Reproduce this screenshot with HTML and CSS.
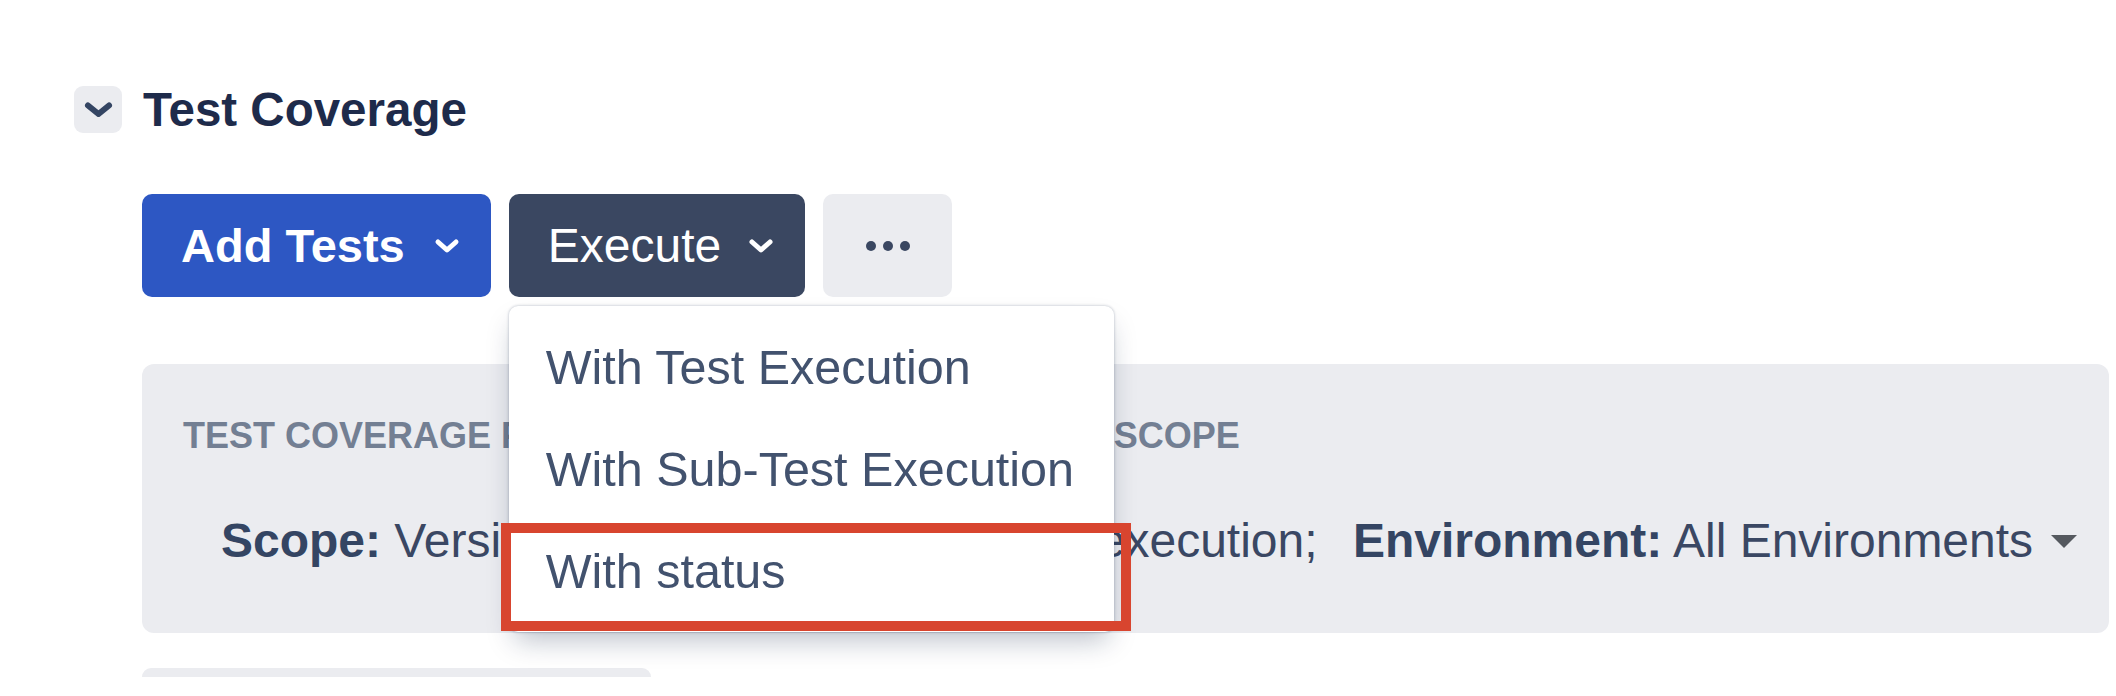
FILE: index.html
```html
<!DOCTYPE html>
<html lang="en">
<head>
<meta charset="utf-8">
<title>Test Coverage</title>
<link rel="stylesheet" href="styles.css">
</head>
<body>
<div class="page">
  <section class="coverage">
    <header class="coverage-head">
      <button class="toggle" aria-label="Collapse">
        <svg width="29" height="15" viewBox="0 0 29 15"><path d="M4 3.5 L14.5 12 L25 3.5" fill="none" stroke="#344563" stroke-width="6" stroke-linecap="round" stroke-linejoin="round"/></svg>
      </button>
      <h2 class="title">Test Coverage</h2>
    </header>

    <div class="coverage-body">
      <div class="toolbar">
        <button class="btn btn-primary">Add Tests
          <svg class="chev" width="26" height="16" viewBox="0 0 26 16"><path d="M4 4 L13 12 L22 4" fill="none" stroke="#fff" stroke-width="5" stroke-linecap="round" stroke-linejoin="round"/></svg>
        </button>
        <div class="dropdown">
          <button class="btn btn-dark">Execute
            <svg class="chev" width="26" height="16" viewBox="0 0 26 16"><path d="M4 4 L13 12 L22 4" fill="none" stroke="#fff" stroke-width="5" stroke-linecap="round" stroke-linejoin="round"/></svg>
          </button>
          <div class="menu">
            <div class="menu-item">With Test Execution</div>
            <div class="menu-item">With Sub-Test Execution</div>
            <div class="menu-item">With status</div>
            <div class="highlight"></div>
          </div>
        </div>
        <button class="btn btn-more" aria-label="More">
          <span class="dot"></span><span class="dot"></span><span class="dot"></span>
        </button>
      </div>

      <div class="panel">
        <div class="panel-label">TEST COVERAGE FOR THE CURRENT VERSION AND SCOPE</div>
        <div class="scope-line"><b>Scope:</b> Version 3.0; Analysis: Latest test execution; <span class="env"><b>Environment:</b> All Environments</span><span class="caret"></span></div>
      </div>

      <div class="next-panel"></div>
    </div>
  </section>
</div>
</body>
</html>
```
FILE: styles.css
```css
* { box-sizing: border-box; }

html, body {
  margin: 0;
  padding: 0;
  background: #ffffff;
  font-family: "Liberation Sans", Arial, sans-serif;
  color: #172B4D;
}

.page {
  padding: 86px 7px 0 74px;
}

.coverage-head {
  display: flex;
  align-items: center;
  gap: 21px;
}

.toggle {
  width: 48px;
  height: 47px;
  border: none;
  border-radius: 9px;
  background: #EBECF0;
  display: flex;
  align-items: center;
  justify-content: center;
  padding: 0;
}

.title {
  margin: 0;
  font-size: 47.5px;
  font-weight: 700;
  color: #1E2B4B;
  line-height: 47px;
}

.coverage-body {
  padding-left: 68px;
}

.toolbar {
  margin-top: 61px;
  display: flex;
  gap: 18px;
  align-items: flex-start;
}

.btn {
  height: 103px;
  border: none;
  border-radius: 10px;
  display: flex;
  align-items: center;
  font-family: "Liberation Sans", Arial, sans-serif;
  padding: 0 31px 0 39px;
  gap: 29px;
  color: #ffffff;
}

.btn-primary {
  background: #2D57C3;
  font-size: 47px;
  font-weight: 700;
}

.btn-dark {
  background: #3A4761;
  font-size: 48px;
  font-weight: 400;
  padding-left: 39px;
  gap: 27px;
}

.btn-more {
  width: 129px;
  background: #EBECF0;
  justify-content: center;
  gap: 7px;
  padding: 0;
}

.dot {
  width: 10px;
  height: 10px;
  border-radius: 50%;
  background: #3A4761;
}

.dropdown {
  position: relative;
}

.menu {
  position: absolute;
  left: 0;
  top: 112px;
  width: 605px;
  padding: 10px 0;
  background: #ffffff;
  border-radius: 9px;
  box-shadow: 0 14px 28px -6px rgba(9, 30, 66, 0.28), 0 0 3px rgba(9, 30, 66, 0.3);
  z-index: 10;
}

.menu-item {
  height: 102px;
  display: flex;
  align-items: center;
  padding-left: 37px;
  font-size: 48.5px;
  color: #42526E;
  white-space: nowrap;
}

.highlight {
  position: absolute;
  left: -8px;
  top: 217px;
  width: 630px;
  height: 108px;
  border: 10px solid #D8452F;
}

.panel {
  margin-top: 67px;
  background: #EBECF0;
  border-radius: 12px;
  padding: 50px 20px 62px 41px;
}

.panel-label {
  font-size: 36px;
  font-weight: 700;
  line-height: 44px;
  color: #737F93;
  white-space: nowrap;
}

.scope-line {
  margin-top: 53px;
  margin-left: 38px;
  font-size: 48px;
  line-height: 60px;
  color: #3A4763;
  white-space: nowrap;
}

.scope-line b {
  color: #344563;
}

.env {
  margin-left: 22px;
}

.caret {
  display: inline-block;
  vertical-align: middle;
  width: 0;
  height: 0;
  margin-left: 18px;
  margin-bottom: 6px;
  border-left: 13px solid transparent;
  border-right: 13px solid transparent;
  border-top: 13px solid #55595F;
}

.next-panel {
  margin-top: 35px;
  width: 509px;
  height: 9px;
  background: #EBECF0;
  border-radius: 10px 10px 0 0;
}
```
